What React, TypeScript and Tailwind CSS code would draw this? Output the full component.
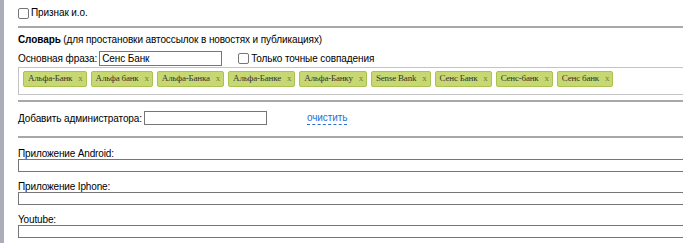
const tags = [
  "Альфа-Банк",
  "Альфа банк",
  "Альфа-Банка",
  "Альфа-Банке",
  "Альфа-Банку",
  "Sense Bank",
  "Сенс Банк",
  "Сенс-банк",
  "Сенс банк",
];

function Box() {
  return <span className="inline-block w-[11px] h-[11px] border border-[#767676] rounded-[2px] bg-white shrink-0" />;
}

function Rule() {
  return <div className="h-[2px] bg-[#a8a8a8] w-full" />;
}

export default function App() {
  return (
    <div className="w-[683px] h-[243px] overflow-hidden bg-white flex font-['Liberation_Sans',Arial,sans-serif] text-[10px] tracking-[-0.1px] text-black">
      <div className="w-[4px] bg-[#abaeb8] shrink-0" />
      <div className="w-[720px] shrink-0 pl-[14px] flex flex-col">
        {/* признак */}
        <div className="h-[20px] mt-[3px] flex items-center gap-[2px]">
          <Box />
          <span className="leading-[14px]">Признак и.о.</span>
        </div>
        <div className="mt-[3px]">
          <Rule />
        </div>

        {/* словарь */}
        <div className="mt-[5px] leading-[14px]">
          <b>Словарь</b> (для простановки автоссылок в новостях и публикациях)
        </div>
        <div className="mt-[3px] h-[16px] flex items-center">
          <span>Основная фраза:</span>
          <span className="ml-[2px] w-[123px] h-[15px] border border-[#767676] px-[2px] leading-[13px]">Сенс Банк</span>
          <span className="ml-[16px] flex items-center gap-[2px]">
            <Box />
            <span>Только точные совпадения</span>
          </span>
        </div>
        <div className="mt-[1px] border border-[#c4c4c4] pl-[4px] pt-[3px] pb-[7px] flex gap-[4px]">
          {tags.map((t) => (
            <span
              key={t}
              className="h-[16px] flex items-center pl-[4px] pr-[3px] bg-[#c7d872] border border-[#aac350] rounded-[2px] font-['Liberation_Serif','Times_New_Roman',serif] text-[9px] tracking-[-0.2px] text-[#333]"
            >
              {t}
              <span className="ml-[6px] text-[#6f7d3a]">x</span>
            </span>
          ))}
        </div>
        <div className="mt-[5px]">
          <Rule />
        </div>

        {/* администратор */}
        <div className="mt-[8px] h-[16px] flex items-center">
          <span>Добавить администратора:</span>
          <span className="ml-[2px] w-[123px] h-[14px] border border-[#767676]" />
          <span className="ml-[40px] text-[#2a6fd0] border-b border-dashed border-[#2a6fd0] leading-[12px]">очистить</span>
        </div>
        <div className="mt-[10px]">
          <Rule />
        </div>

        {/* приложения */}
        {["Приложение Android:", "Приложение Iphone:", "Youtube:"].map((l, i) => (
          <div key={l} className={i === 0 ? "mt-[11px]" : "mt-[10px]"}>
            <div className="h-[10px] leading-[10px] tracking-[-0.15px]">{l}</div>
            <div className="h-[13px] border border-[#767676] w-full" />
          </div>
        ))}
      </div>
    </div>
  );
}
